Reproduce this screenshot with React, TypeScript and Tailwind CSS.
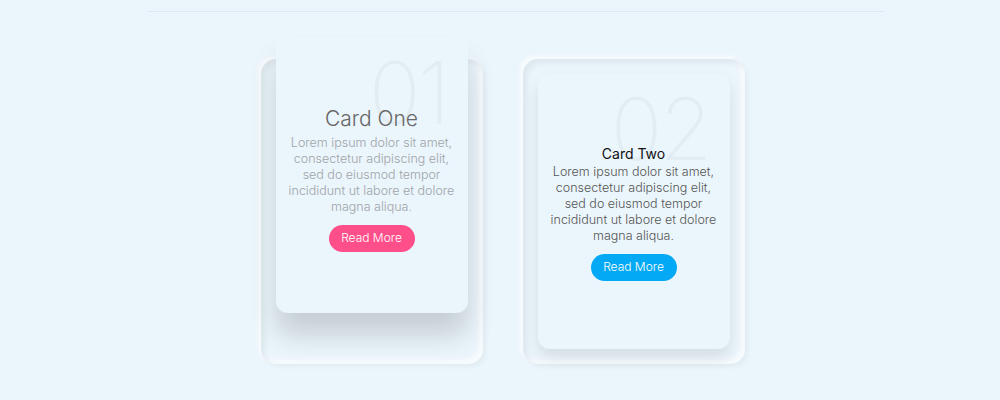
import React from 'react';

type CardProps = {
  num: string;
  title: string;
  color: string;
  hovered?: boolean;
};

const text =
  'Lorem ipsum dolor sit amet, consectetur adipiscing elit, sed do eiusmod tempor incididunt ut labore et dolore magna aliqua.';

function Card({ num, title, color, hovered }: CardProps) {
  return (
    <div className="w-[222px] h-[305px] p-[15px] rounded-[15px] bg-[#ebf5fc] shadow-[inset_4px_4px_6px_rgba(0,0,0,0.06),inset_-4px_-4px_6px_rgba(255,255,255,0.7),3px_3px_5px_rgba(0,0,0,0.04),-3px_-3px_5px_rgba(255,255,255,0.7)]">
      <div
        className={`relative w-full h-full rounded-[12px] bg-[#ebf5fc] flex flex-col items-center justify-center px-4 ${
          hovered
            ? '-translate-y-[36px] shadow-[0_22px_28px_rgba(0,0,0,0.16)]'
            : 'shadow-[0_8px_16px_rgba(0,0,0,0.1)]'
        }`}
      >
        {/* big faded number */}
        <div className="absolute top-[12px] right-[20px] text-[86px] leading-none font-extralight text-[rgba(0,0,0,0.035)] tracking-[-3px]">
          {num}
        </div>
        <h3
          className={`relative ${
            hovered ? 'text-[21px] text-[#666] font-light mt-[4px]' : 'text-[14px] text-[#111] font-normal'
          }`}
        >
          {title}
        </h3>
        <p
          className={`relative w-[166px] text-center text-[12.5px] leading-[16px] font-light ${
            hovered ? 'text-[#a0a4a8]' : 'text-[#555]'
          }`}
        >
          {text}
        </p>
        <a
          className={`relative mt-[10px] w-[86px] h-[27px] rounded-full flex items-center justify-center text-white text-[12px] font-light ${color}`}
        >
          Read More
        </a>
      </div>
    </div>
  );
}

export default function App() {
  return (
    <div
      className="w-[1000px] h-[400px] bg-[#ebf5fc] overflow-hidden pt-[11px]"
      style={{ fontFamily: 'Inter, "Noto Sans", sans-serif' }}
    >
      <div className="ml-[148px] w-[736px] h-px bg-[#dde8f0]" />
      <div className="flex justify-center gap-[40px] mt-[47px] pl-[5px]">
        <Card num="01" title="Card One" color="bg-[#ff4f8b]" hovered />
        <Card num="02" title="Card Two" color="bg-[#03a9f4]" />
      </div>
    </div>
  );
}
